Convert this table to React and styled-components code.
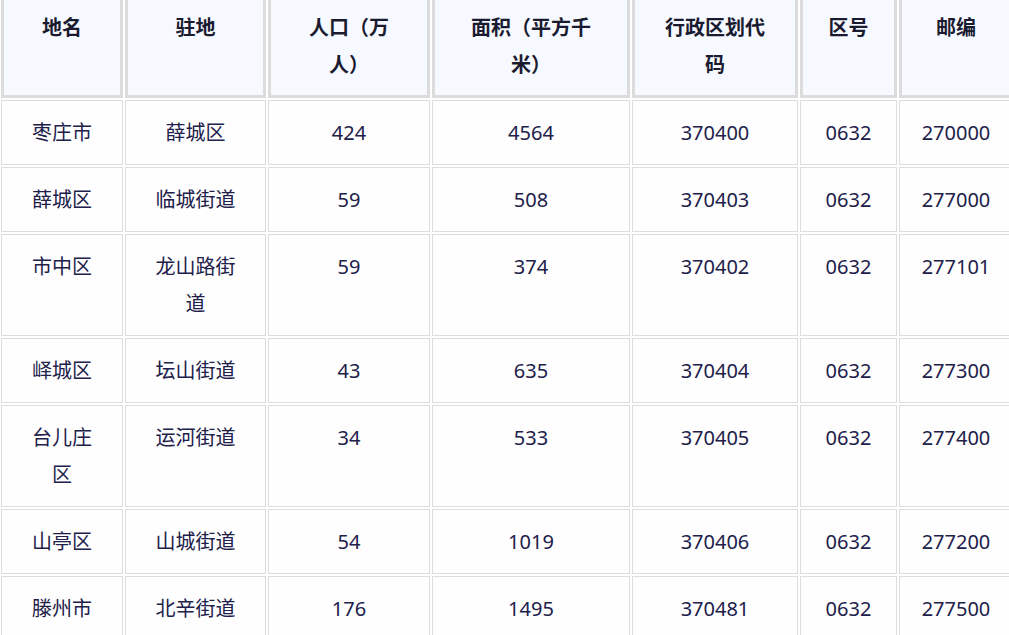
import React from 'react';
import styled, { createGlobalStyle } from 'styled-components';

const GlobalStyle = createGlobalStyle`
  html, body {
    margin: 0;
    padding: 0;
    background: #ffffff;
    overflow: hidden;
  }
  body {
    font-family: "Noto Sans", "Noto Sans CJK SC", sans-serif;
  }
`;

const Table = styled.table`
  border-collapse: separate;
  border-spacing: 2px;
  table-layout: fixed;
  width: 1016px;
  margin: -8px 0 0 -1px;
  font-size: 20px;
  line-height: 37px;
`;

const HeadCell = styled.th`
  box-sizing: border-box;
  width: ${(p) => p.$w}px;
  background: #f6f9ff;
  border: 3px solid #dcdcdc;
  padding: 12px ${(p) => p.$pad}px;
  color: #1b1b30;
  font-weight: 700;
  text-align: center;
  vertical-align: top;
`;

const Cell = styled.td`
  box-sizing: border-box;
  background: #fefefe;
  border: 1px solid #dddddd;
  padding: 13px ${(p) => p.$pad}px;
  color: #21204a;
  text-align: center;
  vertical-align: top;
`;

const columns = [
  { label: '地名', w: 122, pad: 29 },
  { label: '驻地', w: 141, pad: 29 },
  { label: '人口（万人）', w: 162, pad: 29 },
  { label: '面积（平方千米）', w: 198, pad: 29 },
  { label: '行政区划代码', w: 166, pad: 29 },
  { label: '区号', w: 97, pad: 20 },
  { label: '邮编', w: 114, pad: 20 },
];

const rows = [
  ['枣庄市', '薛城区', '424', '4564', '370400', '0632', '270000'],
  ['薛城区', '临城街道', '59', '508', '370403', '0632', '277000'],
  ['市中区', '龙山路街道', '59', '374', '370402', '0632', '277101'],
  ['峄城区', '坛山街道', '43', '635', '370404', '0632', '277300'],
  ['台儿庄区', '运河街道', '34', '533', '370405', '0632', '277400'],
  ['山亭区', '山城街道', '54', '1019', '370406', '0632', '277200'],
  ['滕州市', '北辛街道', '176', '1495', '370481', '0632', '277500'],
];

export default function App() {
  return (
    <>
      <GlobalStyle />
      <Table>
        <thead>
          <tr>
            {columns.map((c) => (
              <HeadCell key={c.label} $w={c.w} $pad={c.pad}>{c.label}</HeadCell>
            ))}
          </tr>
        </thead>
        <tbody>
          {rows.map((r) => (
            <tr key={r[0]}>
              {r.map((v, i) => (
                <Cell key={i} $pad={columns[i].pad}>{v}</Cell>
              ))}
            </tr>
          ))}
        </tbody>
      </Table>
    </>
  );
}
